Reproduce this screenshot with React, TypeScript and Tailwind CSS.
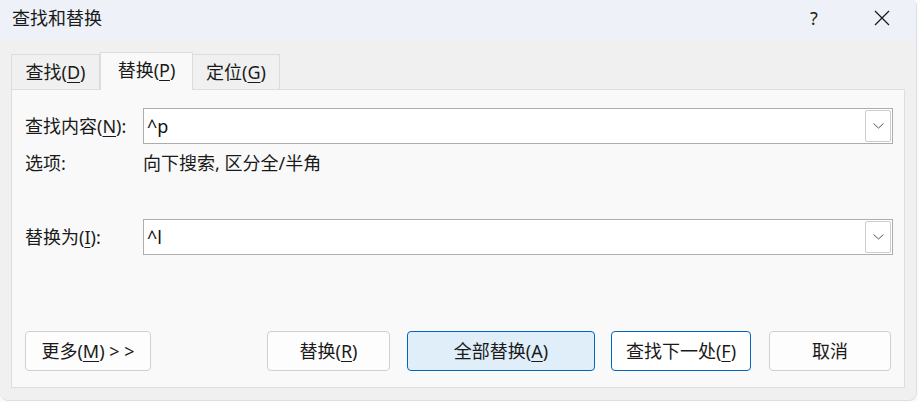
import React from "react";

const font = {
  fontFamily: '"Noto Sans", "Noto Sans CJK SC", sans-serif',
};

function Mn({ c }: { c: string }) {
  return <span className="underline underline-offset-[3px] decoration-1">{c}</span>;
}

function Combo({ value }: { value: string }) {
  return (
    <div className="flex-1 h-[36px] bg-white border border-[#adadad] flex items-center pl-[3px] pr-[1px]">
      <span className="flex-1 text-[18px] leading-none text-[#111]">{value}</span>
      <div className="w-[26px] h-[32px] border border-[#cdcdcd] rounded-[2px] flex items-center justify-center">
        <svg width="11" height="6" viewBox="0 0 11 6" fill="none">
          <path d="M0.5 0.5 L5.5 5 L10.5 0.5" stroke="#555" strokeWidth="1" />
        </svg>
      </div>
    </div>
  );
}

function Btn({
  children,
  w,
  primary,
  focus,
  className = "",
}: {
  children: React.ReactNode;
  w: string;
  primary?: boolean;
  focus?: boolean;
  className?: string;
}) {
  const look = primary
    ? "bg-[#e0eef9] border-[#0067c0]"
    : focus
    ? "bg-white border-[#0067c0]"
    : "bg-[#fdfdfd] border-[#d0d0d0]";
  return (
    <button
      className={`${w} h-[40px] rounded-[4px] border ${look} flex items-center justify-center text-[18px] text-[#1a1a1a] ${className}`}
    >
      {children}
    </button>
  );
}

export default function App() {
  return (
    <div className="w-[918px] h-[402px] bg-[#fbfbfb]" style={font}>
      <div className="w-[917px] h-[401px] rounded-br-[8px] rounded-bl-[8px] rounded-tr-[6px] bg-[#f0f0f0] border-r border-b border-[#dedede] overflow-hidden flex flex-col">
        {/* Title bar */}
        <div className="h-[40px] bg-[#eef2f8] flex items-center pl-[12px] pb-[4px] shrink-0">
          <span className="text-[18px] text-[#1a1a1a] flex-1">查找和替换</span>
          <span className="text-[18px] text-[#222] w-[20px] mr-[50px] text-center">?</span>
          <svg width="16" height="16" viewBox="0 0 16 16" className="mr-[26px]">
            <path d="M1 1 L15 15 M15 1 L1 15" stroke="#1a1a1a" strokeWidth="1.3" />
          </svg>
        </div>

        {/* Tabs */}
        <div className="pl-[11px] pt-[12px] flex items-end h-[49px] shrink-0">
          <div className="w-[89px] h-[35px] border border-b-0 border-[#dcdcdc] bg-[#f0f0f0] flex items-center justify-center text-[18px] text-[#1a1a1a]">
            查找(<Mn c="D" />)
          </div>
          <div className="w-[93px] h-[38px] -mb-[1px] relative z-10 border border-b-0 border-[#dcdcdc] bg-[#f9f9f9] flex items-center justify-center text-[18px] text-[#1a1a1a] pb-[2px]">
            替换(<Mn c="P" />)
          </div>
          <div className="w-[87px] h-[35px] border border-b-0 border-l-0 border-[#dcdcdc] bg-[#f0f0f0] flex items-center justify-center text-[18px] text-[#1a1a1a]">
            定位(<Mn c="G" />)
          </div>
        </div>

        {/* Panel */}
        <div className="ml-[11px] w-[894px] h-[299px] border border-[#dedede] bg-[#f9f9f9] pt-[18px] pl-[13px] pr-[11px] flex flex-col text-[18px] text-[#1a1a1a]">
          <div className="flex items-center">
            <span className="w-[118px]">
              查找内容(<Mn c="N" />):
            </span>
            <Combo value="^p" />
          </div>
          <div className="flex items-center h-[38px]">
            <span className="w-[118px]">选项:</span>
            <span>向下搜索, 区分全/半角</span>
          </div>
          <div className="flex items-center mt-[37px]">
            <span className="w-[118px]">
              替换为(<Mn c="I" />):
            </span>
            <Combo value="^l" />
          </div>

          <div className="flex items-center mt-[76px]">
            <Btn w="w-[126px]">
              更多(<Mn c="M" />)&nbsp;&gt; &gt;
            </Btn>
            <Btn w="w-[123px]" className="ml-[116px]">
              替换(<Mn c="R" />)
            </Btn>
            <Btn w="w-[188px]" primary className="ml-[17px]">
              全部替换(<Mn c="A" />)
            </Btn>
            <Btn w="w-[140px]" focus className="ml-[16px]">
              查找下一处(<Mn c="F" />)
            </Btn>
            <Btn w="w-[122px]" className="ml-[18px]">
              取消
            </Btn>
          </div>
        </div>
      </div>
    </div>
  );
}
